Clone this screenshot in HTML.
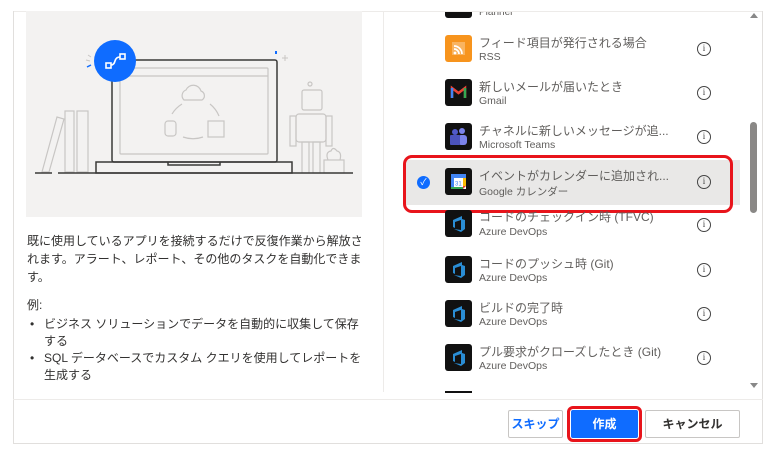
<!DOCTYPE html><html><head><meta charset="utf-8"><style>
*{margin:0;padding:0;box-sizing:border-box}
body{width:770px;height:455px;background:#fff;position:relative;overflow:hidden;font-family:"Liberation Sans","Noto Sans CJK JP",sans-serif;color:#323130}
.abs{position:absolute}
.frame{left:13px;top:11px;width:750px;height:433px;border:1px solid #e1dfdd;border-top:none}
.top{left:13px;top:11px;width:750px;height:1px;background:#edebe9}
.ill{left:26px;top:11px;width:336px;height:206px;background:#f3f2f1}
.vdiv{left:383px;top:11px;width:1px;height:381px;background:#edebe9}
.hdiv{left:13px;top:399px;width:750px;height:1px;background:#edebe9}
.txt{left:27px;top:232px;width:340px;font-size:12px;line-height:18px;color:#323130}
.row{position:absolute;left:405px;width:335px;height:44px}
.ic{position:absolute;left:40px;top:8px;width:27px;height:27px;border-radius:3px;background:#111}
.t1{position:absolute;left:74px;top:7px;font-size:12px;color:#605e5c;white-space:nowrap}
.t2{position:absolute;left:74px;top:24px;font-size:10.5px;color:#605e5c;white-space:nowrap}
.info{position:absolute;left:292px;top:15px;width:14px;height:14px;border:1.3px solid #444;border-radius:50%;font-size:9px;line-height:11px;text-align:center;color:#444;font-family:"Liberation Serif",serif}
.btn{position:absolute;top:410px;height:28px;font-size:12px;font-weight:bold;text-align:center;line-height:27px;border:1px solid #c8c6c4;border-radius:2px;background:#fff}
</style></head><body>
<div class="abs top"></div><div class="abs frame"></div>
<div class="abs ill"></div>
<svg class="abs" style="left:0;top:0" width="390" height="220">
<g fill="none" stroke="#c8c6c4" stroke-width="1.2">
<path d="M42 172 L57 117 L64 119 L49 172Z"/><rect x="65" y="111" width="9" height="61"/><rect x="77" y="111" width="11" height="61"/>
<rect x="120" y="68" width="148" height="86" rx="1"/><line x1="120" y1="76" x2="268" y2="76"/>
<path d="M184 100 a6 6 0 0 1 2-10 a8 8 0 0 1 15 1 a5 5 0 0 1 1 9Z"/>
<path d="M172 114 a30 30 0 0 1 10-10 M210 104 a30 30 0 0 1 9 12 M183 137 a30 30 0 0 0 20 0"/>
<rect x="165" y="121" width="11" height="15" rx="3"/><rect x="208" y="121" width="16" height="16"/>
<rect x="302" y="90" width="20" height="20" rx="2"/><circle cx="310" cy="84" r="2"/>
<rect x="296" y="114" width="30" height="28" rx="3"/><rect x="290" y="116" width="6" height="30"/><rect x="326" y="116" width="6" height="30"/>
<rect x="302" y="142" width="7" height="31"/><rect x="313" y="142" width="7" height="31"/>
<rect x="324" y="160" width="20" height="13"/><path d="M328 160 q-3-8 3-9 q2-5 6 0 q5 1 3 9"/>
</g>
<g fill="none" stroke="#3b3a39" stroke-width="1.5">
<rect x="112" y="60" width="165" height="102" rx="2"/><rect x="96" y="162" width="196" height="11"/>
<path d="M168 162 v3 h52 v-3"/><line x1="35" y1="173" x2="52" y2="173"/><line x1="58" y1="173" x2="353" y2="173"/>
</g>
<circle cx="115" cy="61" r="21" fill="#0f6cff"/>
<g fill="none" stroke="#fff" stroke-width="1.6"><rect x="106" y="63" width="5" height="5"/><rect x="120" y="54" width="5" height="5"/><path d="M111 65 q3 0 4-4 q1-4 5-4"/></g>
<path d="M87 67 l4-2" stroke="#0f6cff" stroke-width="1.5"/><path d="M86 60 l4 1 M88 55 l3 2" stroke="#c8c6c4"/>
<rect x="275" y="51" width="2" height="3" fill="#0f6cff"/><path d="M282 58 h6 M285 55 v6" stroke="#c8c6c4"/>
</svg>
<div class="abs vdiv"></div>
<div class="abs txt">既に使用しているアプリを接続するだけで反復作業から解放されます。アラート、レポート、その他のタスクを自動化できます。<div style="margin-top:10px">例:</div></div>
<div class="abs" style="left:27px;top:316px;width:340px;font-size:12px;line-height:17px">
<div style="padding-left:17px;position:relative"><span style="position:absolute;left:3px">•</span>ビジネス ソリューションでデータを自動的に収集して保存する</div>
<div style="padding-left:17px;position:relative"><span style="position:absolute;left:3px">•</span>SQL データベースでカスタム クエリを使用してレポートを生成する</div></div>
<div class="row" style="top:27px"><div class="ic" style="background:#f7941d"><svg width="27" height="27"><rect x="7" y="7" width="13" height="13" fill="#fff" opacity=".3"/><path d="M9 11a8 8 0 0 1 8 8M9 14a5 5 0 0 1 5 5" stroke="#fff" stroke-width="1.7" fill="none"/><circle cx="10" cy="18" r="1.4" fill="#fff"/></svg></div><div class="t1">フィード項目が発行される場合</div><div class="t2">RSS</div><div class="info">i</div></div>
<div class="row" style="top:71px"><div class="ic"><svg width="27" height="27"><path d="M7 19V9l6.5 5L20 9v10" stroke="#ea4335" stroke-width="2.5" fill="none"/><path d="M7 9v10" stroke="#4285f4" stroke-width="2.5"/><path d="M20 9v10" stroke="#34a853" stroke-width="2.5"/></svg></div><div class="t1">新しいメールが届いたとき</div><div class="t2">Gmail</div><div class="info">i</div></div>
<div class="row" style="top:115px"><div class="ic"><svg width="27" height="27"><circle cx="17" cy="8" r="3" fill="#7b83eb"/><rect x="13" y="12" width="9" height="10" rx="3" fill="#7b83eb"/><circle cx="10" cy="9" r="3" fill="#5059c9"/><rect x="5" y="12" width="10" height="10" rx="1" fill="#4b53bc"/></svg></div><div class="t1">チャネルに新しいメッセージが追...</div><div class="t2">Microsoft Teams</div><div class="info">i</div></div>
<div class="abs" style="left:405px;top:160px;width:335px;height:45px;background:#e9e8e7"></div>
<div class="row" style="top:160px"><div class="ic"><svg width="27" height="27"><rect x="6" y="6" width="15" height="15" fill="#fff"/><path d="M6 6h15v4H6z" fill="#4285f4"/><path d="M6 10h3v11H6z" fill="#4285f4"/><path d="M6 19h12v2H6z" fill="#34a853"/><path d="M18 18h3l-3 3z" fill="#ea4335"/><path d="M18 10h3v8h-3z" fill="#fbbc04"/><text x="10" y="17.5" font-size="6" fill="#4285f4" font-family="Liberation Sans">31</text></svg></div><div class="t1">イベントがカレンダーに追加され...</div><div class="t2">Google カレンダー</div><div class="info">i</div></div>
<div class="abs" style="left:417px;top:176px;width:13px;height:13px;border-radius:50%;background:#0f6cff;color:#fff;font-size:9px;line-height:13px;text-align:center">✓</div>
<div class="abs" style="left:403px;top:155px;width:330px;height:58px;border:3px solid #e8141b;border-radius:9px"></div>
<div class="row" style="top:204px"><div class="ic" style="top:6px"><svg width="27" height="27"><path d="M8 10l9-4v3l3 1v9l-4 3-7-3 7 1V10l-6 2v6l-2-1z" fill="#2a8dd4"/></svg></div><div class="t1" style="top:4px">コードのチェックイン時 (TFVC)</div><div class="t2" style="top:22px">Azure DevOps</div><div class="info" style="top:14px">i</div></div>
<div class="row" style="top:248px"><div class="ic"><svg width="27" height="27"><path d="M8 10l9-4v3l3 1v9l-4 3-7-3 7 1V10l-6 2v6l-2-1z" fill="#2a8dd4"/></svg></div><div class="t1">コードのプッシュ時 (Git)</div><div class="t2">Azure DevOps</div><div class="info">i</div></div>
<div class="row" style="top:292px"><div class="ic"><svg width="27" height="27"><path d="M8 10l9-4v3l3 1v9l-4 3-7-3 7 1V10l-6 2v6l-2-1z" fill="#2a8dd4"/></svg></div><div class="t1">ビルドの完了時</div><div class="t2">Azure DevOps</div><div class="info">i</div></div>
<div class="row" style="top:336px"><div class="ic"><svg width="27" height="27"><path d="M8 10l9-4v3l3 1v9l-4 3-7-3 7 1V10l-6 2v6l-2-1z" fill="#2a8dd4"/></svg></div><div class="t1">プル要求がクローズしたとき (Git)</div><div class="t2">Azure DevOps</div><div class="info">i</div></div>
<div class="abs" style="left:445px;top:391px;width:27px;height:2px;background:#111"></div>
<div class="abs" style="left:445px;top:12px;width:27px;height:6px;background:#111;border-radius:0 0 3px 3px"></div>
<div class="abs" style="left:479px;top:12px;font-size:10px;color:#605e5c;line-height:10px;height:7px;overflow:hidden"><span style="position:relative;top:-4px">Planner</span></div>
<div class="abs" style="left:750px;top:13px;width:0;height:0;border:4px solid transparent;border-bottom:5px solid #888;border-top:none"></div>
<div class="abs" style="left:750px;top:383px;width:0;height:0;border:4px solid transparent;border-top:5px solid #888;border-bottom:none"></div>
<div class="abs" style="left:750px;top:122px;width:7px;height:91px;background:#8a8886;border-radius:4px"></div>
<div class="abs hdiv"></div>
<div class="btn" style="left:508px;width:55px;color:#0f6cff">スキップ</div>
<div class="abs" style="left:567px;top:406px;width:75px;height:36px;border:3px solid #e8141b;border-radius:6px"></div>
<div class="btn" style="left:571px;width:67px;background:#0f6cff;border-color:#0f6cff;color:#fff">作成</div>
<div class="btn" style="left:645px;width:95px;color:#323130">キャンセル</div>
</body></html>
